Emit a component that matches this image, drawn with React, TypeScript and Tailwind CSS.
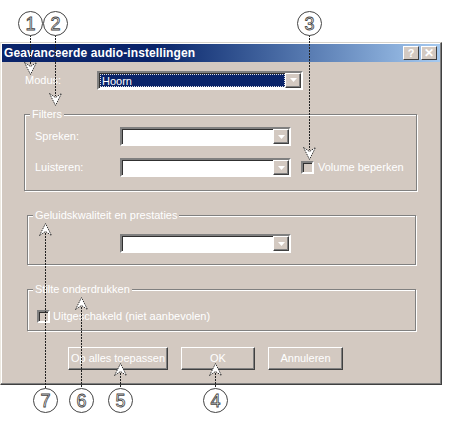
import React from "react";

const FONT = { fontFamily: '"Liberation Sans", Arial, sans-serif' };

function Combo({ width, value }: { width: string; value?: string }) {
  return (
    <div
      className={`${width} h-[19px] flex bg-white border-2 border-t-[#808080] border-l-[#808080] border-b-white border-r-white shadow-[inset_1px_1px_0_#303030]`}
    >
      <div className="flex-1 flex items-center pl-[1px] pt-[1px]">
        {value && (
          <div className="h-[13px] w-full bg-[#0a246a] text-white text-[11px] leading-[13px] pl-[1px] border border-dotted border-[#e0e0e0]">
            {value}
          </div>
        )}
      </div>
      <DropButton />
    </div>
  );
}

function DropButton() {
  return (
    <div className="w-[16px] h-full flex items-center justify-center bg-[#d3c9c1] border border-t-white border-l-white border-r-[#404040] border-b-[#404040] shadow-[inset_-1px_-1px_0_#808080]">
      <svg width="7" height="4" viewBox="0 0 7 4">
        <path d="M0 0 H7 L3.5 4 Z" fill="#ffffff" />
      </svg>
    </div>
  );
}

function Checkbox() {
  return (
    <div className="w-[13px] h-[13px] border-2 border-t-[#808080] border-l-[#808080] border-b-white border-r-white shadow-[inset_1px_1px_0_#303030]" />
  );
}

function Button({ width, label }: { width: string; label: string }) {
  return (
    <div
      className={`${width} h-[23px] flex items-center justify-center text-[11px] text-white border border-t-white border-l-white border-r-[#404040] border-b-[#404040] shadow-[inset_-1px_-1px_0_#808080]`}
    >
      {label}
    </div>
  );
}

function Group({
  label,
  className,
  children,
}: {
  label: string;
  className: string;
  children?: React.ReactNode;
}) {
  return (
    <div
      className={`relative border border-[#808080] shadow-[inset_1px_1px_0_#fff,1px_1px_0_#fff] ${className}`}
    >
      <span className="absolute left-[5px] -top-[7px] px-[2px] bg-[#d3c9c1] text-white text-[11px] leading-[13px]">
        {label}
      </span>
      {children}
    </div>
  );
}

const callouts = [
  { n: "1", cx: 30, cy: 23 },
  { n: "2", cx: 55, cy: 23 },
  { n: "3", cx: 309, cy: 23 },
  { n: "7", cx: 45, cy: 400 },
  { n: "6", cx: 81, cy: 400 },
  { n: "5", cx: 120, cy: 400 },
  { n: "4", cx: 215, cy: 400 },
];

// x, line from y1 to y2, arrow base/tip
const downArrows = [
  { x: 30, y1: 35, top: 62 },
  { x: 55, y1: 35, top: 93 },
  { x: 309, y1: 35, top: 147 },
];
const upArrows = [
  { x: 45, tip: 223, y2: 388 },
  { x: 81, tip: 297, y2: 388 },
  { x: 120, tip: 363, y2: 388 },
  { x: 215, tip: 363, y2: 388 },
];

function Callouts() {
  return (
    <svg
      className="absolute inset-0 pointer-events-none"
      width="453"
      height="423"
      viewBox="0 0 453 423"
    >
      {downArrows.map((a) => (
        <g key={`d${a.x}`}>
          <line x1={a.x + 0.5} y1={a.y1} x2={a.x + 0.5} y2={a.top + 3} stroke="#222" strokeDasharray="2 1" />
          <path
            d={`M${a.x - 5.5} ${a.top + 0.5} L${a.x + 0.5} ${a.top + 4.5} L${a.x + 6.5} ${a.top + 0.5} L${a.x + 0.5} ${a.top + 12.5} Z`}
            fill="#fff"
            stroke="#333"
            strokeDasharray="1.5 1"
          />
        </g>
      ))}
      {upArrows.map((a) => (
        <g key={`u${a.x}${a.tip}`}>
          <line x1={a.x + 0.5} y1={a.tip + 10} x2={a.x + 0.5} y2={a.y2} stroke="#222" strokeDasharray="2 1" />
          <path
            d={`M${a.x - 5.5} ${a.tip + 12.5} L${a.x + 0.5} ${a.tip + 8.5} L${a.x + 6.5} ${a.tip + 12.5} L${a.x + 0.5} ${a.tip + 0.5} Z`}
            fill="#fff"
            stroke="#333"
            strokeDasharray="1.5 1"
          />
        </g>
      ))}
      {callouts.map((c) => (
        <g key={c.n}>
          <circle cx={c.cx + 0.5} cy={c.cy + 0.5} r="12" fill="#fff" stroke="#444" />
          <text
            x={c.cx + 0.5}
            y={c.cy + 7}
            textAnchor="middle"
            fontSize="18"
            fontFamily='"Liberation Sans", Arial, sans-serif'
            fill="#fff"
            stroke="#444"
            strokeWidth="0.8"
          >
            {c.n}
          </text>
        </g>
      ))}
    </svg>
  );
}

export default function App() {
  return (
    <div className="relative w-[453px] h-[423px] bg-white overflow-hidden" style={FONT}>
      <div className="pt-[42px]">
        <div className="w-[442px] h-[343px] bg-[#d3c9c1] border border-t-[#d8d4cc] border-l-[#ece8e0] border-r-[#404040] border-b-[#404040] shadow-[inset_-1px_-1px_0_#808080,inset_1px_1px_0_#fff] p-[1px] flex flex-col">
          {/* title bar */}
          <div className="h-[18px] flex items-center bg-gradient-to-r from-[#0a246a] from-35% to-[#a6caf0] pl-[2px] pr-[3px]">
            <span className="flex-1 text-white font-bold text-[12px] leading-[18px] tracking-[0.1px]">
              Geavanceerde audio-instellingen
            </span>
            <div className="flex gap-[2px]">
              <div className="w-[16px] h-[14px] flex items-center justify-center bg-[#d3c9c1] border border-t-white border-l-white border-r-[#404040] border-b-[#404040] text-white font-bold text-[11px] leading-none">
                ?
              </div>
              <div className="w-[16px] h-[14px] flex items-center justify-center bg-[#d3c9c1] border border-t-white border-l-white border-r-[#404040] border-b-[#404040] text-white font-bold text-[12px] leading-none">
                ✕
              </div>
            </div>
          </div>

          {/* Modus */}
          <div className="flex items-center mt-[9px] h-[18px] text-[11px] text-white">
            <span className="ml-[23px] w-[72px]">Modus:</span>
            <Combo width="w-[206px]" value="Hoorn" />
          </div>

          {/* Filters */}
          <Group label="Filters" className="mt-[25px] ml-[22px] w-[393px] h-[77px] pt-[12px] pl-[10px]">
            <div className="flex items-center text-[11px] text-white">
              <span className="w-[85px]">Spreken:</span>
              <Combo width="w-[171px]" />
            </div>
            <div className="flex items-center mt-[12px] text-[11px] text-white">
              <span className="w-[85px]">Luisteren:</span>
              <Combo width="w-[171px]" />
              <div className="ml-[10px]">
                <Checkbox />
              </div>
              <span className="ml-[4px]">Volume beperken</span>
            </div>
          </Group>

          {/* Geluidskwaliteit */}
          <Group
            label="Geluidskwaliteit en prestaties"
            className="mt-[24px] ml-[25px] w-[389px] h-[50px] pt-[18px] pl-[92px]"
          >
            <Combo width="w-[171px]" />
          </Group>

          {/* Stilte */}
          <Group
            label="Stilte onderdrukken"
            className="mt-[24px] ml-[25px] w-[389px] h-[42px] pt-[18px] pl-[9px]"
          >
            <div className="flex items-center text-[11px] text-white">
              <Checkbox />
              <span className="ml-[3px]">Uitgeschakeld (niet aanbevolen)</span>
            </div>
          </Group>

          {/* buttons */}
          <div className="flex gap-[13px] mt-[16px] ml-[66px]">
            <Button width="w-[100px]" label="Op alles toepassen" />
            <Button width="w-[74px]" label="OK" />
            <Button width="w-[75px]" label="Annuleren" />
          </div>
        </div>
      </div>
      <Callouts />
    </div>
  );
}
